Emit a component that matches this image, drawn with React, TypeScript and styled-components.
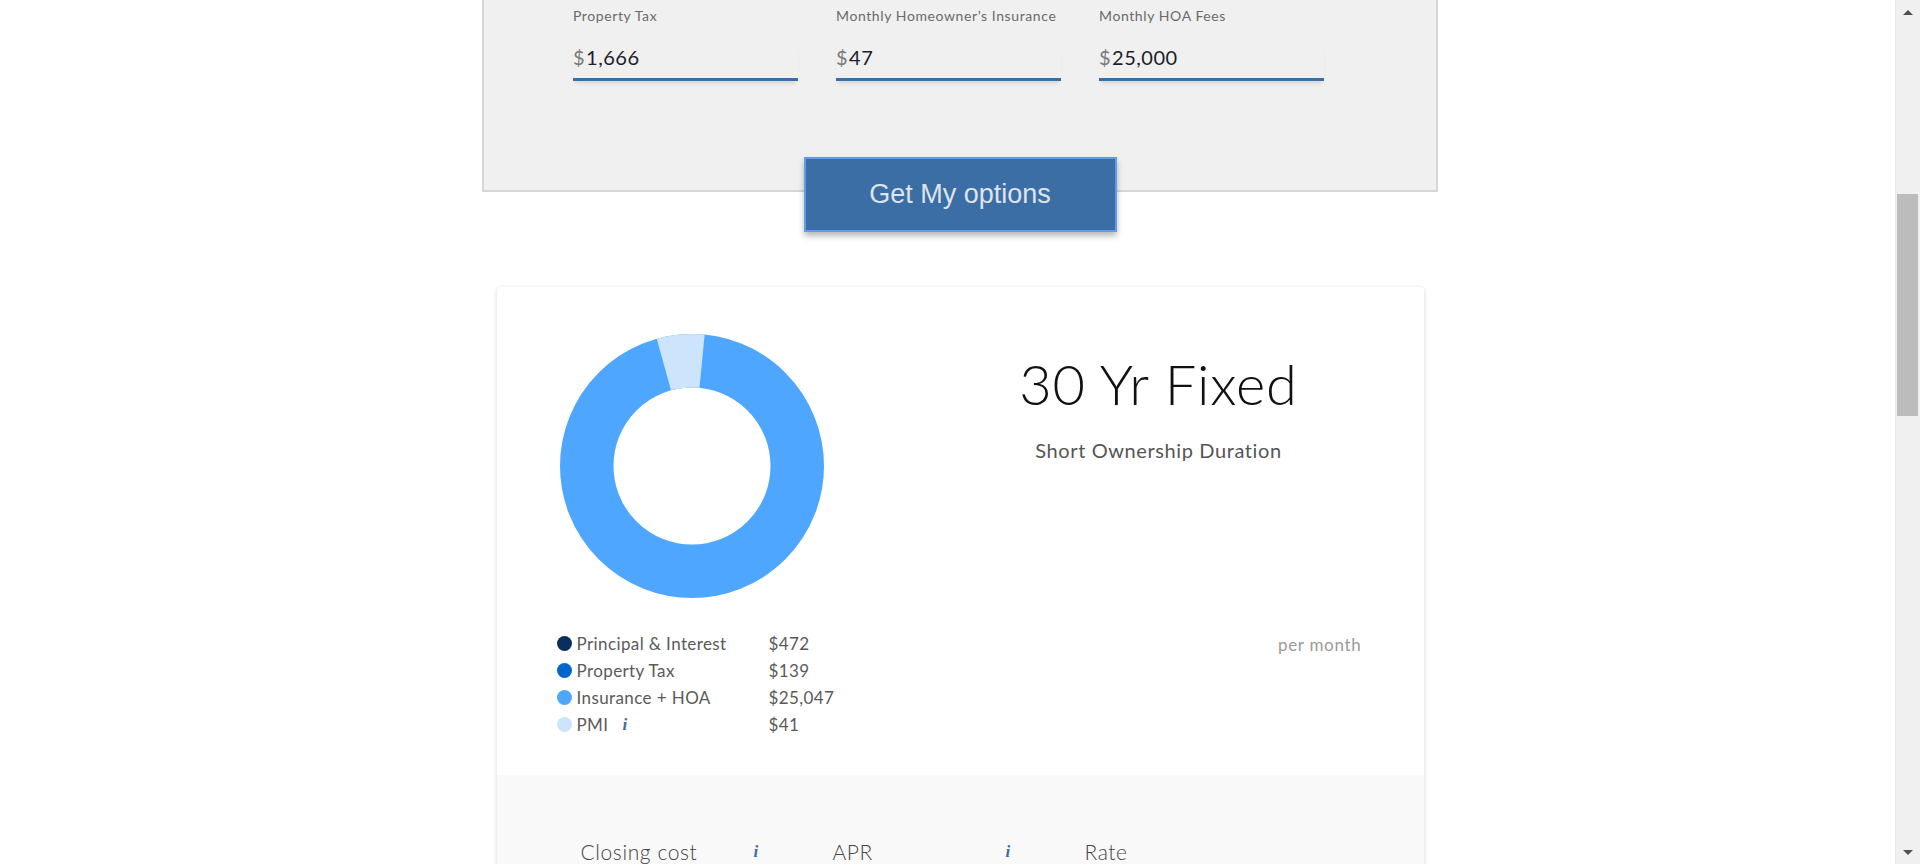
import styled, { createGlobalStyle } from 'styled-components'

const GlobalStyle = createGlobalStyle`
  html, body {
    margin: 0;
    padding: 0;
    background: #fff;
    overflow: hidden;
  }
  body {
    font-family: Lato, 'Liberation Sans', sans-serif;
    color: #333;
  }
`

const Page = styled.div`
  width: 1920px;
  height: 864px;
  overflow: hidden;
  display: flex;
  flex-direction: column;
  align-items: center;
`

const FormPanel = styled.div`
  box-sizing: border-box;
  flex-shrink: 0;
  width: 956px;
  height: 192px;
  background: #f0f0f0;
  border: 2px solid #d6d6d6;
  border-top: none;
  padding: 8px 0 0 89px;
`

const FieldRow = styled.div`
  display: flex;
  gap: 38px;
`

const Field = styled.div`
  width: 225px;
  display: flex;
  flex-direction: column;
`

const FieldLabel = styled.label`
  font-size: 14px;
  line-height: 16px;
  color: #6a6a6a;
  letter-spacing: 0.6px;
  white-space: nowrap;
`

const FieldInput = styled.div`
  margin-top: 21px;
  padding-bottom: 9px;
  font-size: 20px;
  line-height: 24px;
  letter-spacing: 0.5px;
  color: #1d1d2b;
  border-bottom: 3px solid #3a6ea5;
  box-shadow: 0 4px 4px -2px rgba(0, 0, 0, 0.12);
`

const Currency = styled.span`
  color: #7a7a7a;
  margin-right: 1px;
`

const ButtonRow = styled.div`
  flex-shrink: 0;
  margin-top: -35px;
  position: relative;
  z-index: 1;
`

const OptionsButton = styled.button`
  box-sizing: border-box;
  width: 313px;
  height: 75px;
  background: #3b6ea5;
  border: 2px solid #629bee;
  color: #dfe4ec;
  font-family: 'Liberation Sans', Arial, sans-serif;
  font-size: 27px;
  box-shadow: 0 4px 6px rgba(0, 0, 0, 0.28);
  cursor: pointer;
`

const Card = styled.div`
  margin-top: 55px;
  width: 927px;
  background: #fff;
  border-radius: 4px;
  box-shadow: 0 1px 4px rgba(0, 0, 0, 0.16);
  overflow: hidden;
  flex-shrink: 0;
`

const Summary = styled.div`
  box-sizing: border-box;
  height: 488px;
  display: flex;
  padding: 47px 62px 0 60px;
`

const ChartColumn = styled.div`
  width: 340px;
  display: flex;
  flex-direction: column;
`

const Donut = styled.svg`
  width: 264px;
  height: 264px;
  margin-left: 3px;
  display: block;
`

const Legend = styled.div`
  margin-top: 32px;
  display: grid;
  grid-template-columns: 212px auto;
  grid-auto-rows: 27px;
  align-items: center;
  font-size: 17px;
  letter-spacing: 0.4px;
  color: #5a5a5a;
`

const LegendLabel = styled.div`
  display: flex;
  align-items: center;
`

const Dot = styled.span<{ $color: string }>`
  width: 15px;
  height: 15px;
  border-radius: 50%;
  background: ${(p) => p.$color};
  margin-right: 5px;
  flex-shrink: 0;
`

const InfoIcon = styled.span<{ $gap?: number }>`
  font-family: 'Liberation Serif', 'DejaVu Serif', serif;
  font-style: italic;
  font-weight: bold;
  font-size: 17px;
  color: #3a6ea5;
  margin-left: ${(p) => p.$gap ?? 0}px;
`

const PlanColumn = styled.div`
  flex: 1;
  display: flex;
  flex-direction: column;
  align-items: flex-end;
`

const PlanHeading = styled.div`
  width: 406px;
  display: flex;
  flex-direction: column;
  align-items: center;
`

const PlanTitle = styled.h2`
  margin: 18px 0 0;
  font-family: Lato, 'Open Sans', sans-serif;
  font-weight: 300;
  font-size: 56px;
  line-height: 64px;
  color: #111;
  letter-spacing: 0.8px;
`

const PlanSubtitle = styled.div`
  margin-top: 22px;
  font-family: Lato, 'Open Sans', sans-serif;
  font-size: 20px;
  line-height: 24px;
  color: #555;
  letter-spacing: 0.6px;
`

const PerMonth = styled.div`
  margin-top: 172px;
  font-size: 17px;
  letter-spacing: 0.7px;
  color: #9a9a9a;
`

const Details = styled.div`
  background: #f9f9f9;
  min-height: 200px;
  padding: 65px 0 0 84px;
  display: grid;
  grid-template-columns: repeat(3, 252px);
  align-content: start;
`

const DetailHead = styled.div`
  display: flex;
  align-items: center;
  font-family: Lato, 'Open Sans', sans-serif;
  font-weight: 300;
  font-size: 21px;
  line-height: 24px;
  letter-spacing: 0.6px;
  color: #444;
`

const DetailLabel = styled.span`
  width: 173px;
`

const Scrollbar = styled.div`
  position: fixed;
  top: 0;
  right: 0;
  width: 25px;
  height: 864px;
  background: #f0f0f0;
  border-left: 1px solid #e9e9e9;
  box-sizing: border-box;
`

const Arrow = styled.div<{ $down?: boolean }>`
  position: absolute;
  left: 7px;
  ${(p) => (p.$down ? 'bottom: 9px;' : 'top: 10px;')}
  width: 0;
  height: 0;
  border-left: 5px solid transparent;
  border-right: 5px solid transparent;
  ${(p) => (p.$down ? 'border-top: 5px solid #505050;' : 'border-bottom: 5px solid #505050;')}
`

const Thumb = styled.div`
  position: absolute;
  left: 1px;
  top: 194px;
  width: 21px;
  height: 222px;
  background: #bcbcbc;
`

const fields = [
  { label: 'Property Tax', value: '1,666' },
  { label: 'Monthly Homeowner’s Insurance', value: '47' },
  { label: 'Monthly HOA Fees', value: '25,000' }
]

const legend = [
  { color: '#0a2f5f', label: 'Principal & Interest', value: '$472' },
  { color: '#0066cc', label: 'Property Tax', value: '$139' },
  { color: '#4ea6ff', label: 'Insurance + HOA', value: '$25,047' },
  { color: '#cce4fc', label: 'PMI', value: '$41', info: true }
]

// arc helper for the donut slice
function arc(cx: number, cy: number, r: number, a0: number, a1: number) {
  const p = (a: number) => {
    const rad = ((a - 90) * Math.PI) / 180
    return `${cx + r * Math.cos(rad)} ${cy + r * Math.sin(rad)}`
  }
  const large = a1 - a0 > 180 ? 1 : 0
  return `M ${p(a0)} A ${r} ${r} 0 ${large} 1 ${p(a1)}`
}

export default function App() {
  return (
    <>
      <GlobalStyle />
      <Page>
        {/* Form panel */}
        <FormPanel>
          <FieldRow>
            {fields.map((f) => (
              <Field key={f.label}>
                <FieldLabel>{f.label}</FieldLabel>
                <FieldInput>
                  <Currency>$</Currency>
                  {f.value}
                </FieldInput>
              </Field>
            ))}
          </FieldRow>
        </FormPanel>

        <ButtonRow>
          <OptionsButton type='button'>Get My options</OptionsButton>
        </ButtonRow>

        {/* Result card */}
        <Card>
          <Summary>
            <ChartColumn>
              <Donut viewBox='0 0 264 264'>
                <circle cx='132' cy='132' r='105.25' fill='none' stroke='#4ea6ff' strokeWidth='53.5' />
                <path d={arc(132, 132, 105.25, -15.5, 5.5)} fill='none' stroke='#cce4fc' strokeWidth='53.5' />
              </Donut>
              <Legend>
                {legend.map((l) => (
                  <LegendRow key={l.label} item={l} />
                ))}
              </Legend>
            </ChartColumn>

            <PlanColumn>
              <PlanHeading>
                <PlanTitle>30 Yr Fixed</PlanTitle>
                <PlanSubtitle>Short Ownership Duration</PlanSubtitle>
              </PlanHeading>
              <PerMonth>per month</PerMonth>
            </PlanColumn>
          </Summary>

          <Details>
            <DetailHead>
              <DetailLabel>Closing cost</DetailLabel>
              <InfoIcon>i</InfoIcon>
            </DetailHead>
            <DetailHead>
              <DetailLabel>APR</DetailLabel>
              <InfoIcon>i</InfoIcon>
            </DetailHead>
            <DetailHead>
              <DetailLabel>Rate</DetailLabel>
            </DetailHead>
          </Details>
        </Card>
      </Page>

      <Scrollbar>
        <Arrow />
        <Thumb />
        <Arrow $down />
      </Scrollbar>
    </>
  )
}

function LegendRow({ item }: { item: (typeof legend)[number] }) {
  return (
    <>
      <LegendLabel>
        <Dot $color={item.color} />
        {item.label}
        {item.info && <InfoIcon $gap={14}>i</InfoIcon>}
      </LegendLabel>
      <div>{item.value}</div>
    </>
  )
}
